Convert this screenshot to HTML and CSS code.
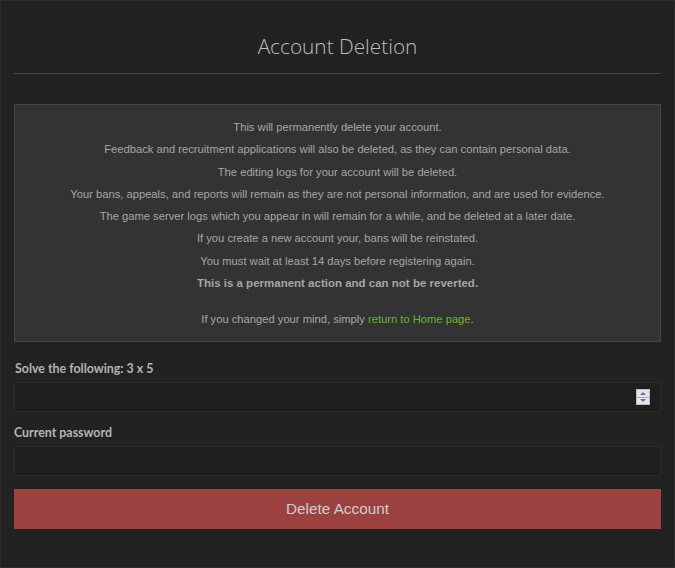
FILE: index.html
```html
<!DOCTYPE html>
<html>
<head>
<meta charset="utf-8">
<title>Account Deletion</title>
<link rel="stylesheet" href="styles.css">
</head>
<body>
<div class="page">
  <h1 class="title">Account Deletion</h1>
  <hr class="rule">
  <div class="notice">
    <div class="lines">
      <div>This will permanently delete your account.</div>
      <div>Feedback and recruitment applications will also be deleted, as they can contain personal data.</div>
      <div>The editing logs for your account will be deleted.</div>
      <div>Your bans, appeals, and reports will remain as they are not personal information, and are used for evidence.</div>
      <div>The game server logs which you appear in will remain for a while, and be deleted at a later date.</div>
      <div>If you create a new account your, bans will be reinstated.</div>
      <div>You must wait at least 14 days before registering again.</div>
      <div class="strong">This is a permanent action and can not be reverted.</div>
    </div>
    <div class="back">If you changed your mind, simply <a class="link" href="#">return to Home page</a>.</div>
  </div>
  <form class="form">
    <label class="label">Solve the following: 3 x 5</label>
    <div class="field">
      <input class="input" type="text">
      <span class="spin"><span class="up"></span><span class="down"></span></span>
    </div>
    <label class="label label-pw">Current password</label>
    <div class="field">
      <input class="input" type="password">
    </div>
    <button class="btn" type="button">Delete Account</button>
  </form>
</div>
</body>
</html>
```

FILE: styles.css
```css
html, body {
  margin: 0;
  padding: 0;
  background: #222222;
}
.page {
  box-sizing: border-box;
  width: 675px;
  height: 568px;
  border: 1px solid #2d2d2d;
  padding: 0 13px;
  font-family: "Liberation Sans", Arial, sans-serif;
}
.title {
  margin: 0;
  padding-top: 31px;
  font-family: "Open Sans", sans-serif;
  font-weight: 300;
  font-size: 20.8px;
  line-height: 28px;
  color: #bdbdbd;
  text-align: center;
}
.rule {
  margin: 13px 0 30px;
  border: 0;
  height: 1px;
  background: #474747;
}
.notice {
  background: #333333;
  border: 1px solid #444444;
  padding: 11px 10px 10px;
  text-align: center;
  font-size: 11.2px;
  color: #a6a6a6;
  height: 238px;
  box-sizing: border-box;
}
.lines {
  line-height: 22.3px;
}
.strong {
  font-weight: bold;
  font-size: 11.5px;
}
.back {
  margin-top: 13.5px;
  line-height: 22px;
}
.link {
  color: #6db52b;
  text-decoration: none;
}
.form {
  display: flex;
  flex-direction: column;
  margin: 0;
  padding-top: 19px;
}
.label {
  font-family: Lato, sans-serif;
  font-weight: bold;
  font-size: 12.4px;
  line-height: 16px;
  color: #b4b4b4;
  padding-left: 1px;
}
.label-pw {
  margin-top: 13px;
  padding-left: 0;
}
.field {
  position: relative;
  margin-top: 5px;
}
.input {
  display: block;
  box-sizing: border-box;
  width: 100%;
  height: 30px;
  margin: 0;
  background: #1e1e1e;
  border: 1px solid #2c2c2c;
  outline: none;
}
.spin {
  position: absolute;
  right: 11px;
  top: 7px;
  width: 14px;
  height: 16px;
  box-sizing: border-box;
  background: #e4e4e4;
  border: 1px solid #bdbdbd;
  display: flex;
  flex-direction: column;
}
.up, .down {
  flex: 1;
  display: flex;
  align-items: center;
  justify-content: center;
}
.up {
  border-bottom: 1px solid #a9a9a9;
}
.up::before {
  content: "";
  border-left: 3px solid transparent;
  border-right: 3px solid transparent;
  border-bottom: 3px solid #5a6fc9;
}
.down::before {
  content: "";
  border-left: 3px solid transparent;
  border-right: 3px solid transparent;
  border-top: 3px solid #5a6fc9;
}
.btn {
  margin-top: 13px;
  height: 40px;
  width: 100%;
  background: #9b4140;
  border: 0;
  color: #cfcfcf;
  font-family: "Liberation Sans", Arial, sans-serif;
  font-size: 15.3px;
  padding: 0;
}
```
